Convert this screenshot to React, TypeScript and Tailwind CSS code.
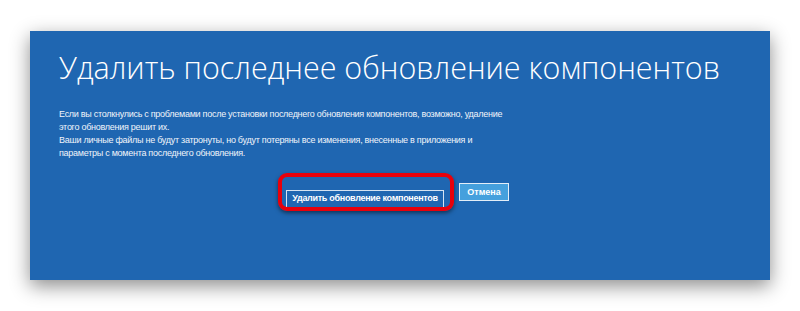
export default function App() {
  return (
    <div className="w-[800px] h-[311px] bg-white pl-[30px] pt-[31px]">
      <div className="w-[740px] h-[249px] bg-[#1f66b1] shadow-[0_6px_18px_rgba(0,0,0,0.45)] pl-[29px] pt-[14px] text-white">
        <h1 className="text-[30.5px] font-light leading-[44px] tracking-[0px] text-white" style={{ fontFamily: '"Open Sans", "Noto Sans", sans-serif' }}>
          Удалить последнее обновление компонентов
        </h1>
        <div className="mt-[19px] text-[9px] leading-[12.5px] tracking-[-0.27px] text-[#f0f4fa]" style={{ fontFamily: '"Liberation Sans", Arial, sans-serif' }}>
          <p>Если вы столкнулись с проблемами после установки последнего обновления компонентов, возможно, удаление<br />этого обновления решит их.</p>
          <p className="mt-[1px]">Ваши личные файлы не будут затронуты, но будут потеряны все изменения, внесенные в приложения и<br />параметры с момента последнего обновления.</p>
        </div>
        <div className="mt-[24px] flex gap-[15px] pl-[227px]">
          <div className="relative">
            <button className="h-[18px] w-[158px] border border-[#d6e3f2] bg-[#1f66b1] text-[9px] tracking-[-0.3px] font-bold text-white leading-none whitespace-nowrap" style={{ fontFamily: '"Liberation Sans", Arial, sans-serif' }}>
              Удалить обновление компонентов
            </button>
            <div className="absolute left-[-8px] top-[-10px] w-[176px] h-[38px] rounded-[9px] border-[4px] border-[#e8000b] shadow-[0_2px_4px_rgba(0,0,0,0.5)]"></div>
          </div>
          <button className="h-[18px] w-[50px] border border-[#e4eef8] bg-[#45a0dd] text-[9px] font-bold text-white leading-none whitespace-nowrap" style={{ fontFamily: '"Liberation Sans", Arial, sans-serif' }}>
            Отмена
          </button>
        </div>
      </div>
    </div>
  );
}
